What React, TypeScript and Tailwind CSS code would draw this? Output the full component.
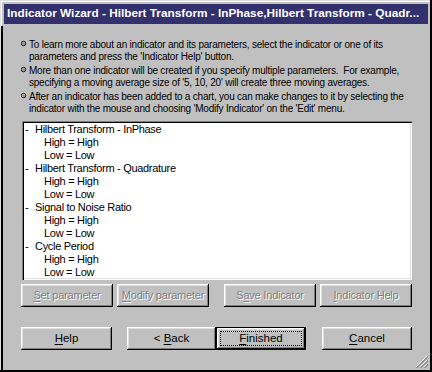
import React from "react";

const raised =
  "shadow-[inset_-1px_-1px_0_#000,inset_1px_1px_0_#fff,inset_-2px_-2px_0_#808080,inset_2px_2px_0_#dfdfdf]";

const notes: string[][] = [
  [
    "To learn more about an indicator and its parameters, select the indicator or one of its",
    "parameters and press the 'Indicator Help' button.",
  ],
  [
    "More than one indicator will be created if you specify multiple parameters.\u00a0 For example,",
    "specifying a moving average size of '5, 10, 20' will create three moving averages.",
  ],
  [
    "After an indicator has been added to a chart, you can make changes to it by selecting the",
    "indicator with the mouse and choosing 'Modify Indicator' on the 'Edit' menu.",
  ],
];

const indicators = [
  "Hilbert Transform - InPhase",
  "Hilbert Transform - Quadrature",
  "Signal to Noise Ratio",
  "Cycle Period",
];

function Label({ text, hot }: { text: string; hot: number }) {
  return (
    <span>
      {text.slice(0, hot)}
      <span className="underline underline-offset-2">{text[hot]}</span>
      {text.slice(hot + 1)}
    </span>
  );
}

function DisabledButton({ text, hot, className }: { text: string; hot: number; className?: string }) {
  return (
    <div
      className={`h-[23px] w-[92px] flex items-center justify-center bg-[#c0c0c0] text-[11px] tracking-[-0.2px] text-[#808080] [text-shadow:1px_1px_0_#fff] ${raised} ${className ?? ""}`}
    >
      <Label text={text} hot={hot} />
    </div>
  );
}

function Button({ text, hot, className }: { text: string; hot: number; className?: string }) {
  return (
    <div
      className={`h-[23px] flex items-center justify-center bg-[#c0c0c0] text-[11.5px] text-black ${raised} ${className ?? ""}`}
    >
      <Label text={text} hot={hot} />
    </div>
  );
}

export default function App() {
  return (
    <div className="w-[432px] h-[372px] relative bg-[#c0c0c0] p-[4px] flex flex-col font-['Liberation_Sans',Arial,sans-serif] text-black shadow-[inset_-2px_-2px_0_#000,inset_1px_1px_0_#dfdfdf,inset_2px_2px_0_#fff]">
      {/* Title bar */}
      <div className="h-[20px] bg-[#33306e] px-[3px] flex items-center text-white font-bold text-[11.8px] whitespace-nowrap overflow-hidden">
        Indicator Wizard - Hilbert Transform - InPhase,Hilbert Transform - Quadr...
      </div>

      {/* Notes */}
      <div className="mt-[15px] pl-[17px] flex flex-col gap-[2px]">
        {notes.map((lines, i) => (
          <div key={i} className="flex text-[10px] leading-[12px] tracking-[-0.22px] whitespace-nowrap">
            <svg className="w-[8px] h-[12px] shrink-0" viewBox="0 0 8 12">
              <circle cx="2.5" cy="4.5" r="2.3" fill="#9a9a9a" stroke="#202020" strokeWidth="1" />
            </svg>
            <div>
              {lines.map((l) => (
                <div key={l}>{l}</div>
              ))}
            </div>
          </div>
        ))}
      </div>

      {/* Indicator list */}
      <div className="mt-[6px] ml-[18px] w-[390px] h-[159px] bg-white pt-[2px] pl-[3px] text-[11px] leading-[13px] tracking-[-0.3px] whitespace-nowrap shadow-[inset_1px_1px_0_#808080,inset_2px_2px_0_#000,inset_-1px_-1px_0_#fff,inset_-2px_-2px_0_#dfdfdf]">
        {indicators.map((name) => (
          <div key={name}>
            <div className="flex">
              <span className="w-[10px]">-</span>
              <span>{name}</span>
            </div>
            <div className="pl-[19px]">High = High</div>
            <div className="pl-[19px]">Low = Low</div>
          </div>
        ))}
      </div>

      {/* Parameter buttons */}
      <div className="mt-[4px] ml-[17px] flex">
        <DisabledButton text="Set parameter" hot={0} />
        <DisabledButton text="Modify parameter" hot={0} className="ml-[4px]" />
        <DisabledButton text="Save Indicator" hot={1} className="ml-[15px]" />
        <DisabledButton text="Indicator Help" hot={0} className="ml-[4px]" />
      </div>

      {/* Wizard buttons */}
      <div className="mt-[20px] ml-[17px] flex">
        <Button text="Help" hot={0} className="w-[91px]" />
        <Button text="< Back" hot={2} className="w-[89px] ml-[15px]" />
        <div className="w-[90px] h-[23px] border border-black">
          <div className={`h-full flex items-center justify-center bg-[#c0c0c0] text-[11.5px] p-[3px] ${raised}`}>
            <div className="w-full h-full flex items-center justify-center border border-dotted border-black">
              <Label text="Finished" hot={0} />
            </div>
          </div>
        </div>
        <Button text="Cancel" hot={0} className="w-[90px] ml-[16px]" />
      </div>

      {/* Frame edge below the caption */}
      <div className="absolute left-[1px] top-[26px] bottom-0 w-[2px] bg-black" />

      {/* Size grip */}
      <svg className="absolute right-[4px] bottom-[4px] w-[13px] h-[13px]" viewBox="0 0 13 13">
        <path d="M12 1 L1 12 M12 5 L5 12 M12 9 L9 12" stroke="#fff" strokeWidth="1" />
        <path d="M13 1 L1 13 M13 5 L5 13 M13 9 L9 13" stroke="#808080" strokeWidth="1.2" transform="translate(0.5 0)" />
      </svg>
    </div>
  );
}
